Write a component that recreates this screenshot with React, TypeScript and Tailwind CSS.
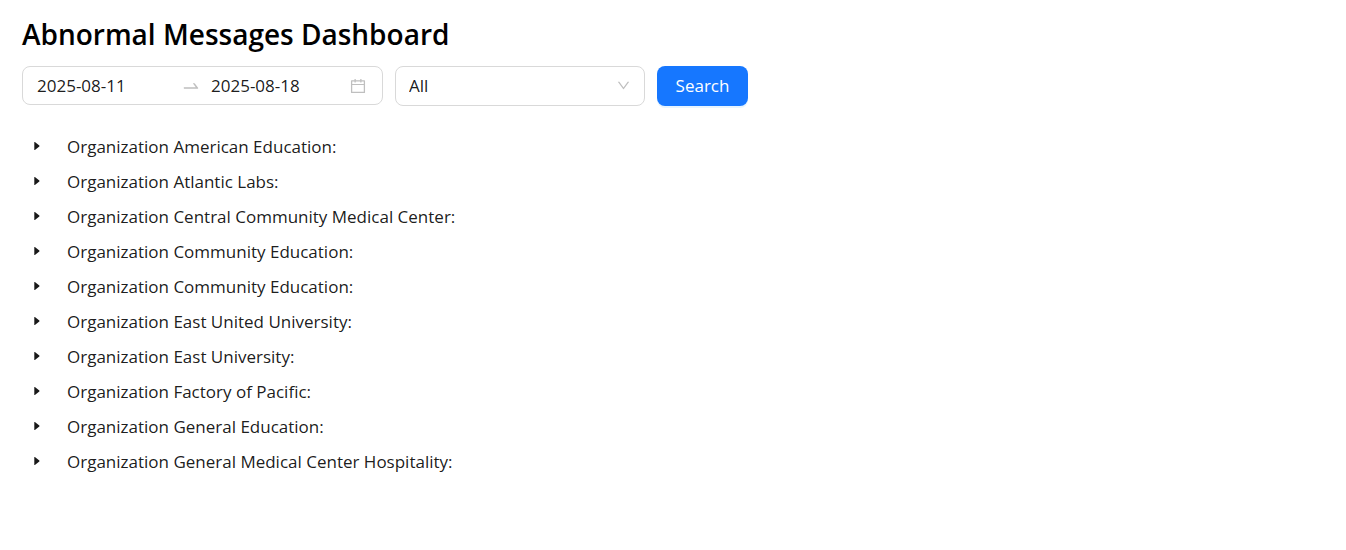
import { useState } from "react";

const organizations = [
  "Organization American Education:",
  "Organization Atlantic Labs:",
  "Organization Central Community Medical Center:",
  "Organization Community Education:",
  "Organization Community Education:",
  "Organization East United University:",
  "Organization East University:",
  "Organization Factory of Pacific:",
  "Organization General Education:",
  "Organization General Medical Center Hospitality:",
];

function ArrowIcon() {
  return (
    <svg viewBox="0 0 1024 1024" className="size-5 shrink-0 text-[#bfbfbf]" fill="currentColor" aria-hidden="true">
      <path d="M873.1 596.2l-164-208A32 32 0 00684 376h-64.8c-6.7 0-10.4 7.7-6.3 13l144.3 183H152c-4.4 0-8 3.6-8 8v60c0 4.400 3.600 8 8 8h695.900c26.800 0 41.700-30.800 25.200-51.800z" />
    </svg>
  );
}

function CalendarIcon() {
  return (
    <svg viewBox="0 0 1024 1024" className="ml-1 size-[18px] shrink-0 text-[#bfbfbf]" fill="currentColor" aria-hidden="true">
      <path d="M880 184H712v-64c0-4.400-3.600-8-8-8h-56c-4.400 0-8 3.600-8 8v64H384v-64c0-4.400-3.600-8-8-8h-56c-4.400 0-8 3.600-8 8v64H144c-17.700 0-32 14.300-32 32v664c0 17.700 14.300 32 32 32h736c17.700 0 32-14.300 32-32V216c0-17.700-14.300-32-32-32zm-40 656H184V460h656v380zM184 392V256h128v48c0 4.400 3.600 8 8 8h56c4.400 0 8-3.600 8-8v-48h256v48c0 4.400 3.600 8 8 8h56c4.400 0 8-3.600 8-8v-48h128v136H184z" />
    </svg>
  );
}

function DownIcon() {
  return (
    <svg viewBox="0 0 1024 1024" className="pointer-events-none absolute right-[14px] top-3 size-[15px] text-[#bfbfbf]" fill="currentColor" aria-hidden="true">
      <path d="M884 256h-75c-5.100 0-9.900 2.500-12.900 6.600L512 654.200 227.900 262.600c-3-4.100-7.800-6.600-12.900-6.600h-75c-6.500 0-10.300 7.400-6.500 12.700l352.600 486.100c12.800 17.600 39 17.600 51.700 0l352.600-486.100c3.900-5.300.1-12.700-6.400-12.700z" />
    </svg>
  );
}

function CaretIcon() {
  return (
    <svg viewBox="0 0 6 10" className="h-[10px] w-[6px]" fill="currentColor" aria-hidden="true">
      <path d="M0.300 1.300Q0.300 0.600 0.900 1.100L5.300 4.600Q5.800 5 5.300 5.400L0.900 8.900Q0.300 9.400 0.300 8.700Z" />
    </svg>
  );
}

export default function App() {
  const [start, setStart] = useState("2025-08-11");
  const [end, setEnd] = useState("2025-08-18");

  return (
    <main className="bg-white px-[22px] pt-[15px] font-['Open_Sans',sans-serif] text-[17px] text-black/90">
      <h1 className="text-[28px] leading-[39px] font-semibold text-black">Abnormal Messages Dashboard</h1>

      <form className="mt-3 flex flex-wrap items-start gap-3" onSubmit={(e) => e.preventDefault()}>
        <div className="flex h-[39px] w-[361px] items-center rounded-lg border border-[#d9d9d9] pr-[15px] pl-[14px]">
          <input
            aria-label="Start date"
            className="w-0 flex-1 bg-transparent outline-none"
            value={start}
            onChange={(e) => setStart(e.target.value)}
          />
          <span className="px-[10px]">
            <ArrowIcon />
          </span>
          <input
            aria-label="End date"
            className="w-0 flex-1 bg-transparent outline-none"
            value={end}
            onChange={(e) => setEnd(e.target.value)}
          />
          <CalendarIcon />
        </div>

        <div className="relative w-[250px]">
          <select
            aria-label="Organization"
            className="h-10 w-full appearance-none rounded-lg border border-[#d9d9d9] bg-white px-[13px] outline-none"
          >
            <option>All</option>
          </select>
          <DownIcon />
        </div>

        <button
          type="submit"
          className="h-10 w-[91px] rounded-lg bg-[#1677ff] text-white shadow-[0_2px_0_rgba(5,145,255,0.1)]"
        >
          Search
        </button>
      </form>

      <ul className="mt-6">
        {organizations.map((name, index) => (
          <li key={index} className="flex h-[35px] items-start">
            <button type="button" aria-label={`Expand ${name}`} className="flex h-8 w-[30px] items-center justify-center">
              <CaretIcon />
            </button>
            <span className="pl-[15px] leading-[34px]">{name}</span>
          </li>
        ))}
      </ul>
    </main>
  );
}
